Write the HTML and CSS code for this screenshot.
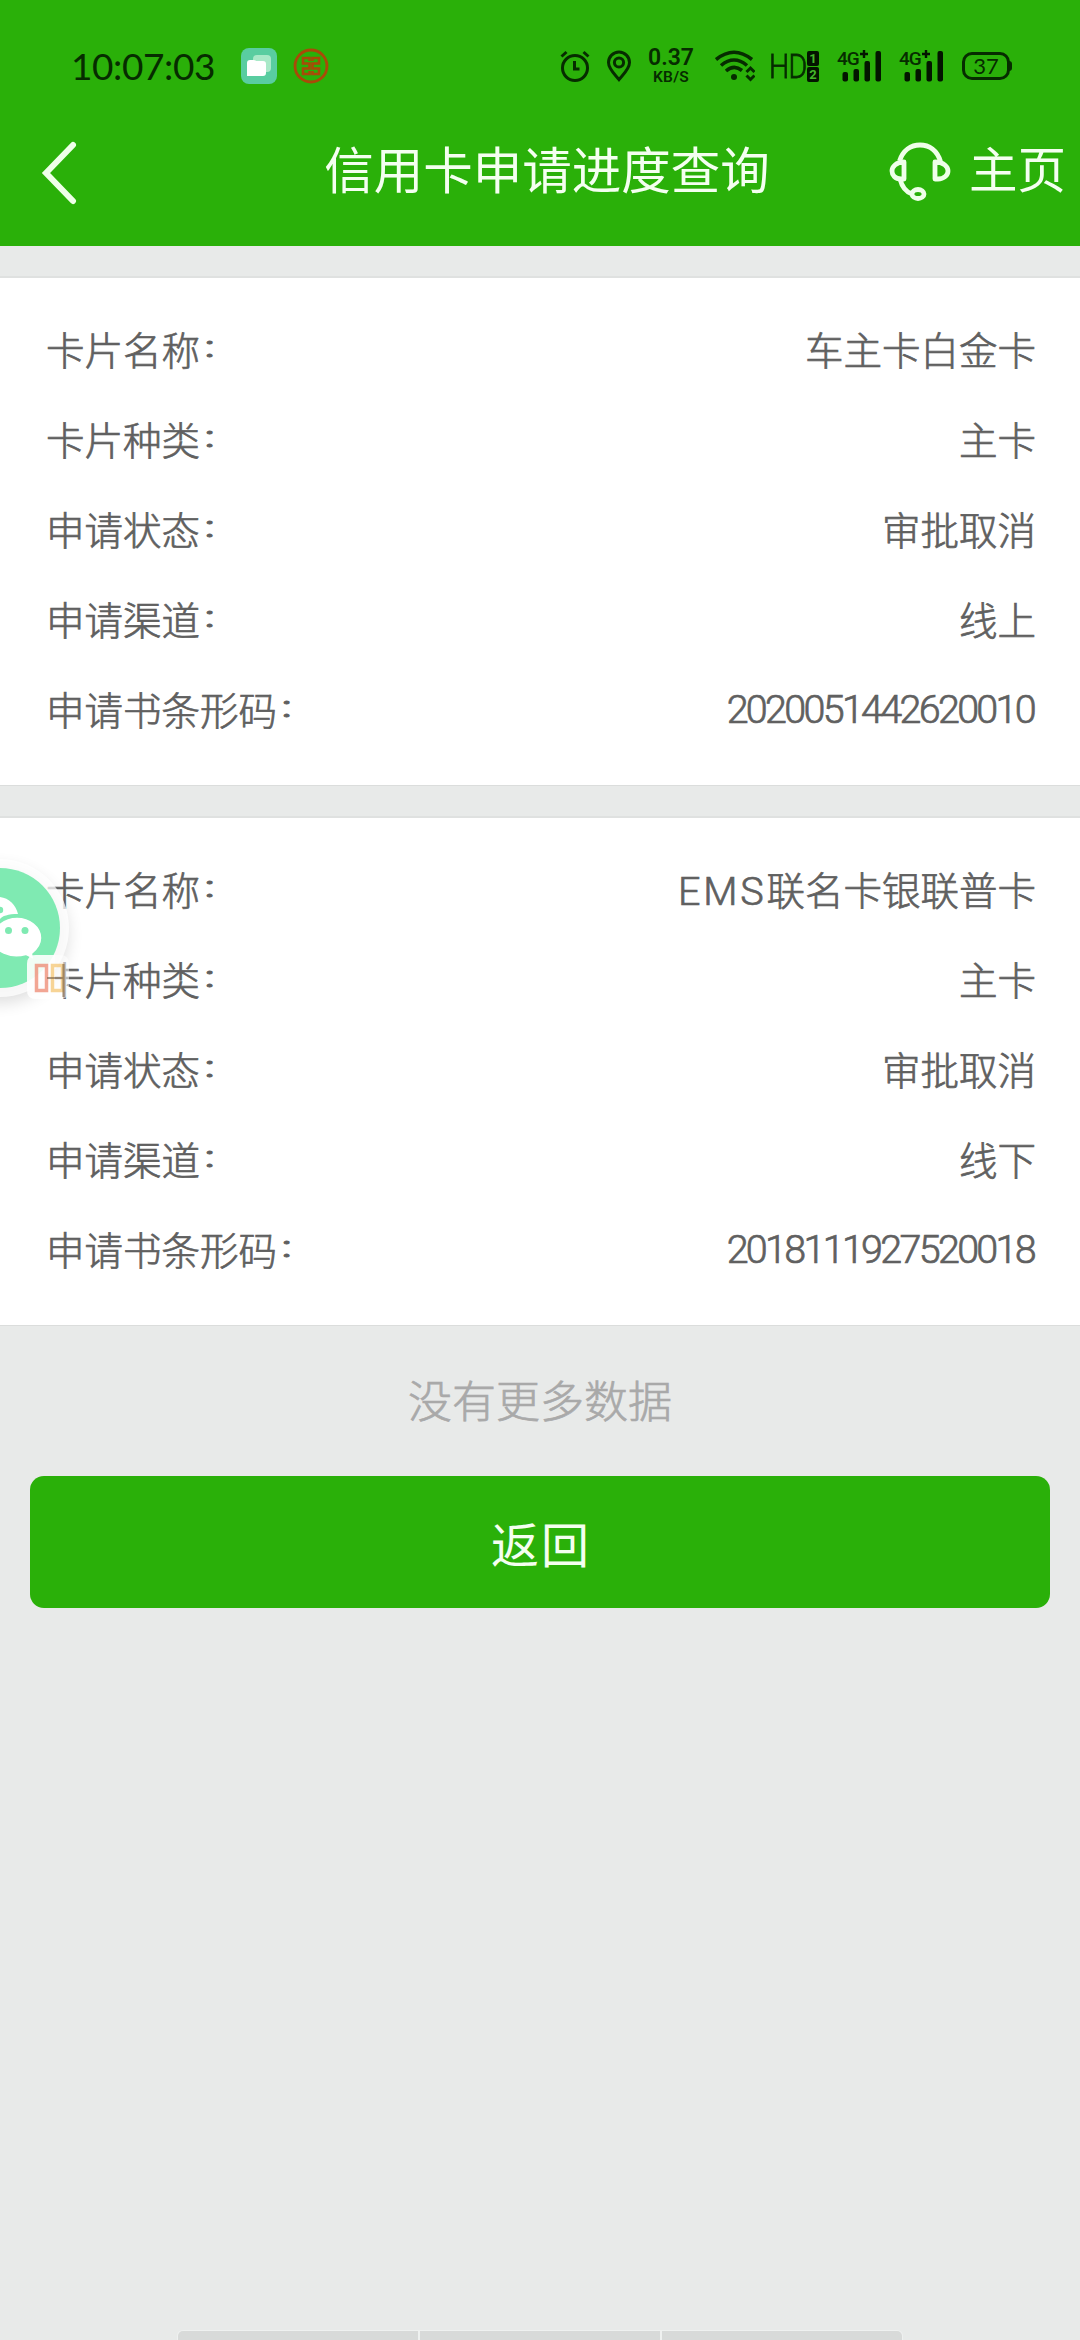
FILE: index.html
```html
<!DOCTYPE html>
<html lang="zh-CN">
<head>
<meta charset="utf-8">
<title>信用卡申请进度查询</title>
<link rel="stylesheet" href="styles.css">
</head>
<body>
<header class="header">
  <div class="status">
    <div class="status-left">
      <span class="time">10:07:03</span>
      <svg class="app" width="36" height="36" viewBox="0 0 36 36"><rect width="36" height="36" rx="8" fill="#59cda0"/><rect x="12" y="7" width="18" height="17" rx="4" fill="#a9e9c8"/><path d="M6 15q0-3 3-3h3q2 0 3 1h7q3 0 3 3v9q0 3-3 3H6z" fill="#fff"/></svg>
      <svg class="bank" width="36" height="36" viewBox="0 0 36 36" fill="none" stroke="#a94a08"><circle cx="18" cy="18" r="16" stroke-width="2.800"/><path d="M16.500 13V10H10V15.500H16.500V20.500H10V26H16.500V23M19.500 13V10H26V15.500H19.500V20.500H26V26H19.500V23" stroke-width="2.600"/></svg>
    </div>
    <div class="status-right">
      <svg class="alarm" width="30" height="32" viewBox="0 0 30 32" fill="none" stroke="#062c00" stroke-width="3"><circle cx="15" cy="18" r="12.500"/><path d="M14.500 11v8h5M1.500 6.500l5-4.500M28.500 6.500l-5-4.500"/></svg>
      <svg class="pin" width="26" height="32" viewBox="0 0 26 32" fill="none" stroke="#062c00" stroke-width="3"><path d="M13 29.500C9 24.500 2.500 19 2.500 12.500a10.500 10.500 0 0 1 21 0C23.500 19 17 24.500 13 29.500z"/><circle cx="13" cy="12.500" r="4.600"/></svg>
      <div class="speed"><b>0.37</b><i>KB/S</i></div>
      <svg class="wifi" width="40" height="32" viewBox="0 0 40 32" fill="none" stroke="#062c00" stroke-width="3.600"><path d="M1 9.500Q19 -5 37 9.500M6 15.500Q19 4.500 32 15.500M11 21Q19 14 27 20.500"/><circle cx="19" cy="27" r="3" fill="#062c00" stroke="none"/><path d="M31.500 22l4-4 4 4M31.500 25.500l4 4 4-4" stroke-width="3"/></svg>
      <span class="hd">HD</span>
      <div class="sims"><span>1</span><span>2</span></div>
      <div class="signal"><span>4G</span><svg width="44" height="32" viewBox="0 0 44 32" fill="#031500"><path d="M23 4h8M27 0v8" stroke="#031500" stroke-width="2.400"/><rect x="5.500" y="22" width="5.500" height="9.500" rx="2"/><rect x="16.500" y="19" width="5.500" height="12.500" rx="2"/><rect x="27.500" y="11" width="5.500" height="20.500" rx="2"/><rect x="38.500" y="1" width="5.500" height="30.500" rx="2"/></svg></div>
      <div class="signal"><span>4G</span><svg width="44" height="32" viewBox="0 0 44 32" fill="#031500"><path d="M23 4h8M27 0v8" stroke="#031500" stroke-width="2.400"/><rect x="5.500" y="22" width="5.500" height="9.500" rx="2"/><rect x="16.500" y="19" width="5.500" height="12.500" rx="2"/><rect x="27.500" y="11" width="5.500" height="20.500" rx="2"/><rect x="38.500" y="1" width="5.500" height="30.500" rx="2"/></svg></div>
      <div class="battery">37</div>
    </div>
  </div>
  <nav class="nav">
    <svg class="back" width="36" height="66" viewBox="0 0 36 66" fill="none" stroke="#efffe9" stroke-width="6" stroke-linecap="round"><path d="M32 5L5 33L32 61"/></svg>
    <h1>信用卡申请进度查询</h1>
    <div class="home">
      <svg width="62" height="60" viewBox="0 0 62 60" fill="none" stroke="#efffe9" stroke-width="4.800"><path d="M10.500 20C14 9 22 4 31 4s17 5 20.500 16.500"/><path d="M15 21v17H12C6 38 3 34 3 30s4-9 12-9zM46 21v17h3C55 38 59 34 59 30s-4-9-13-9z" stroke-linejoin="round"/><path d="M11 38C13 46 17 51 23 53"/><ellipse cx="29" cy="53" rx="6" ry="4.500"/></svg>
      <span>主页</span>
    </div>
  </nav>
</header>
<main>
  <section class="card">
    <div class="row"><span>卡片名称<em>：</em></span><span>车主卡白金卡</span></div>
    <div class="row"><span>卡片种类<em>：</em></span><span>主卡</span></div>
    <div class="row"><span>申请状态<em>：</em></span><span>审批取消</span></div>
    <div class="row"><span>申请渠道<em>：</em></span><span>线上</span></div>
    <div class="row"><span>申请书条形码<em>：</em></span><span class="num">2020051442620010</span></div>
  </section>
  <section class="card">
    <div class="row"><span>卡片名称<em>：</em></span><span><span class="latin">EMS</span>联名卡银联普卡</span></div>
    <div class="row"><span>卡片种类<em>：</em></span><span>主卡</span></div>
    <div class="row"><span>申请状态<em>：</em></span><span>审批取消</span></div>
    <div class="row"><span>申请渠道<em>：</em></span><span>线下</span></div>
    <div class="row"><span>申请书条形码<em>：</em></span><span class="num">2018111927520018</span></div>
  </section>
  <p class="more">没有更多数据</p>
  <button class="return">返回</button>
</main>
<svg class="float" width="100" height="170" viewBox="0 0 100 170">
  <defs><filter id="s" x="-50%" y="-50%" width="200%" height="200%"><feGaussianBlur stdDeviation="8"/></filter></defs>
  <circle cx="0" cy="85" r="68" fill="#000" opacity=".13" filter="url(#s)"/>
  <circle cx="0" cy="78" r="69" fill="#fff" opacity=".75"/>
  <circle cx="0" cy="78" r="60" fill="#7feab2"/>
  <path d="M0 47c9 1 16 8 18 17-10 0-16 2-18 5z" fill="#fff"/>
  <circle cx="0" cy="60" r="3.200" fill="#7feab2"/>
  <path d="M17 67c13 0 25 9 25 21 0 7-4 12-9 16l1 6-8-4c-15 4-34-2-34-18 0-12 12-21 25-21z" fill="#fff" stroke="#7feab2" stroke-width="1.500"/>
  <circle cx="8.500" cy="80.500" r="3.500" fill="#7feab2"/><circle cx="25" cy="80.500" r="3.500" fill="#7feab2"/>
  <path d="M27 114q0-9 9-9h24q9 0 9 9v26q0 9-9 9H36q-9 0-9-9z" fill="#fff" opacity=".55"/>
  <path d="M27 114q0-9 9-9h19v44H36q-9 0-9-9z" fill="#fff" opacity=".75"/>
  <g fill="none" stroke-width="3.500" opacity=".7"><rect x="36.500" y="115.500" width="10" height="25" stroke="#ed8168"/><rect x="52.500" y="115.500" width="10" height="25" stroke="#f5c36b"/></g>
  <path d="M47 128h17M63.500 114v33" stroke="#765d43" stroke-width="2.200" opacity=".6"/>
</svg>
<div class="handle"><i></i><i></i><i></i></div>
</body>
</html>
```
FILE: styles.css
```css
* { box-sizing: border-box; }
html, body { margin: 0; padding: 0; }
body {
  position: relative;
  display: flex;
  flex-direction: column;
  width: 1080px;
  height: 2340px;
  overflow: hidden;
  background: #e8eae9;
  color: #606060;
  font-family: "Noto Sans CJK SC", sans-serif;
  font-weight: 300;
}
svg { display: block; flex: none; }
.header { height: 246px; background: #2ab009; }
.status {
  display: flex;
  justify-content: space-between;
  height: 96px;
  padding: 36px 68px 0 71px;
  color: #062c00;
}
.status-left, .status-right { display: flex; align-items: center; height: 60px; }
.time { width: 170px; font: 400 37px/60px Lato, sans-serif; letter-spacing: -.4px; white-space: nowrap; }
.bank { margin-left: 16px; }
.pin { margin-left: 16px; }
.speed { display: flex; flex-direction: column; align-items: center; gap: 5px; width: 48px; margin-left: 15px; white-space: nowrap; }
.speed b { font: 600 23px/17px Roboto, sans-serif; }
.speed i { font: 600 15.500px/13px Roboto, sans-serif; letter-spacing: .3px; }
.wifi { margin-left: 20px; }
.hd { width: 38px; margin-left: 14px; font: 300 34px/60px Roboto, sans-serif; letter-spacing: -1px; -webkit-text-stroke: .8px #062c00; transform: scaleX(.84); transform-origin: 0 50%; }
.sims { display: flex; flex-direction: column; gap: 1px; width: 12px; }
.sims span { height: 15px; border-radius: 2px; background: #031500; color: #45b52a; font: 700 13px/15px Roboto, sans-serif; text-align: center; }
.signal { position: relative; width: 44px; height: 32px; margin-left: 18px; }
.signal span { position: absolute; left: 0; top: 1px; font: 500 19px/16px Roboto, sans-serif; letter-spacing: -1px; white-space: nowrap; }
.battery {
  position: relative;
  width: 48px;
  height: 28px;
  margin: 0 2px 0 19px;
  border: 3px solid #062c00;
  border-radius: 10px;
  font: 400 22px/22px Lato, sans-serif;
  text-align: center;
}
.battery::after { content: ""; position: absolute; right: -5px; top: 6px; width: 3px; height: 10px; border-radius: 0 3px 3px 0; background: #062c00; }
.nav { display: grid; grid-template-columns: 220px 1fr 220px; align-items: center; height: 150px; color: #f4fff0; }
.back { margin-left: 41px; margin-top: 3px; }
.nav h1 { margin: 0; padding-left: 14px; font-size: 49.500px; font-weight: 400; line-height: 150px; text-align: center; white-space: nowrap; transform: translateY(-3px); }
.home { display: flex; align-items: center; gap: 18px; margin-left: 29px; font-size: 48.500px; font-weight: 400; white-space: nowrap; }
.home span { line-height: 150px; transform: translateY(-4px); }
.card {
  margin-top: 30px;
  padding: 28px 44px 29px 46px;
  background: #fff;
  border-top: 2px solid #dfe1e0;
  border-bottom: 1px solid #dbdddc;
  height: 510px;
}
.row { display: flex; justify-content: space-between; height: 90px; font-size: 38.500px; line-height: 85px; white-space: nowrap; -webkit-text-stroke: .7px currentColor; }
.row em { font-style: normal; display: inline-block; transform: translateY(-6px) scaleY(.65); -webkit-text-stroke-width: 1.200px; transform-origin: 50% 64%; }
.num { font: 300 39.500px/87px Roboto, sans-serif; font-kerning: none; letter-spacing: -2.700px; margin-right: 2px; }
.latin { font-family: Roboto, sans-serif; font-size: 39.500px; line-height: 1; letter-spacing: 2.800px; }
.more { margin: 0; height: 150px; font-size: 44px; line-height: 147px; text-align: center; color: #a9a9a9; -webkit-text-stroke: .7px currentColor; }
.return { display: block; width: 1020px; height: 132px; margin: 0 auto; padding: 0; border: 0; border-radius: 14px; background: #2ab009; color: #f4fff0; font: 400 48px/130px "Noto Sans CJK SC", sans-serif; letter-spacing: 2px; text-indent: 2px; }
.float { position: absolute; left: 0; top: 850px; }
.handle { display: flex; gap: 2px; width: 724px; height: 9px; margin: auto auto 0 178px; }
.handle i { flex: 1; background: #d8dad9; box-shadow: 0 0 0 1px #eff1f0; }
.handle i:first-child { border-top-left-radius: 5px; }
.handle i:last-child { border-top-right-radius: 5px; }
```
